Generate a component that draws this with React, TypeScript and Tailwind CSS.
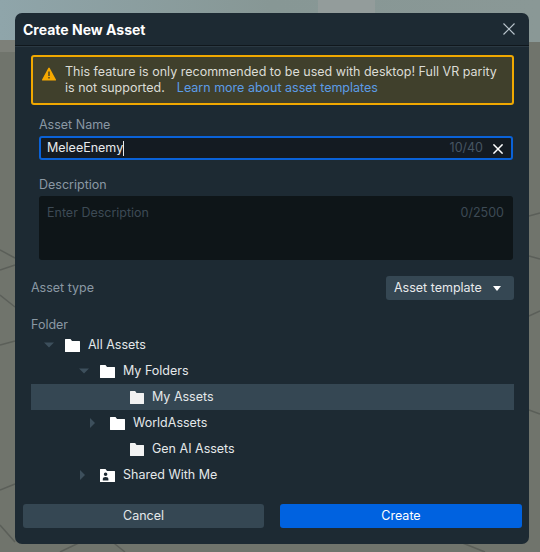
function Close({ size, width, className }: { size: number; width: number; className: string }) {
  return (
    <svg width={size} height={size} viewBox="0 0 12 12" className={className}>
      <path d="M.5.5l11 11M11.500.5l-11 11" stroke="currentColor" strokeWidth={width} fill="none" />
    </svg>
  )
}

function Caret({ open }: { open?: boolean }) {
  return (
    <svg width="10" height="10" viewBox="0 0 10 10" className="text-[#3d4f5c]">
      {open ? <path d="M0 2.500h10L5 7.500z" fill="currentColor" /> : <path d="M1 0v10L6 5z" fill="currentColor" />}
    </svg>
  )
}

function Folder({ shared, dim }: { shared?: boolean; dim?: boolean }) {
  return (
    <svg width={dim ? 14 : 15} height="13" viewBox="0 0 15 13" preserveAspectRatio="none" className={dim ? 'text-[#f2f2f2]' : 'text-white'}>
      <path d="M0 .5Q0 0 .5 0h5l1.500 2h7.500q.5 0 .5.5v10q0 .5-.5.5H.5q-.5 0-.5-.5z" fill="currentColor" />
      {shared && (
        <path d="M3.800 5.200a1.800 1.800 0 1 1 3.600 0a1.800 1.800 0 0 1-3.600 0zM2.800 11.500V10q0-2 2.800-2t2.800 2v1.500z" fill="#1d2a33" />
      )}
    </svg>
  )
}

function Row({ label, indent, caret, shared, active, dim }: { label: string; indent: string; caret?: 'open' | 'closed'; shared?: boolean; active?: boolean; dim?: boolean }) {
  return (
    <div className={`flex h-[26px] items-center text-[12.500px] text-[#e4e8ea] ${active ? 'bg-[#354753]' : ''}`}>
      <div className={`flex items-center ${indent}`}>
        <div className="w-[21px]">{caret && <Caret open={caret === 'open'} />}</div>
        <Folder shared={shared} dim={dim} />
        <span className="ml-2">{label}</span>
      </div>
    </div>
  )
}

export default function App() {
  return (
    <div className="relative h-[552px] w-[540px] overflow-hidden bg-[#70746c] font-['Inter',sans-serif]">
      <svg className="absolute inset-0" width="540" height="552" viewBox="0 0 540 552">
        <defs>
          <linearGradient id="sky" x1="0" y1="0" x2="1" y2="0">
            <stop offset="0" stopColor="#8fa5aa" />
            <stop offset="0.5" stopColor="#879795" />
            <stop offset="1" stopColor="#8a9896" />
          </linearGradient>
        </defs>
        <rect width="540" height="42" fill="url(#sky)" />
        <rect x="318" width="57" height="13" fill="#939c9b" />
        <path d="M0 40h15v12H0z" fill="#7d8079" />
        <path d="M0 250l15 8M0 270l15-5M0 295l15 12M0 345l15-4M0 490l15-6M0 525l15 17M60 552l25-12M110 540l15 12M485 552l-25-10M529 410l11 4M529 216l11-3M529 256l11 3M529 316l11-5" stroke="#5b5f59" strokeWidth="1.500" fill="none" />
      </svg>

      <div className="absolute left-[15px] top-[13px] flex h-[531px] w-[514px] flex-col rounded-[7px] bg-[#1d2a33]">
        <div className="flex h-[32px] items-center justify-between pl-2 pr-[14px]">
          <h1 className="pt-[2px] text-[14px] font-bold leading-none text-white">Create New Asset</h1>
          <Close size={12} width={1.200} className="text-[#b9c4cc]" />
        </div>
        <div className="h-[2px] border-t border-[#10171c] bg-[#2b3943]" />

        <div className="ml-4 mt-2 mr-[15px] flex h-[50px] gap-[9px] rounded-[3px] border-2 border-[#f0a800] bg-[#40402c] pl-[9px] pr-2 pt-[7px] text-[12.500px] leading-[16px] text-[#dcdcd6]">
          <svg width="14" height="14" viewBox="0 0 14 14" className="mt-[3px] shrink-0">
            <path d="M7 .5a.8.8 0 0 1 .7.4l6.200 11.600a.7.7 0 0 1-.6 1H.7a.7.7 0 0 1-.6-1L6.300.9A.8.8 0 0 1 7 .5z" fill="#f5a800" />
            <path d="M6.300 4.500h1.400v4.500H6.300zM6.300 10h1.400v1.400H6.300z" fill="#40402c" />
          </svg>
          <p className="whitespace-nowrap">
            This feature is only recommended to be used with desktop! Full VR parity
            <br />
            is not supported.
            <a className="ml-3 text-[#5c9ce6]">Learn more about asset templates</a>
          </p>
        </div>

        <div className="ml-6 mr-4 mt-[12px]">
          <label className="block h-[19px] text-[12.500px] leading-[16px] text-[#8a98a3]">Asset Name</label>
          <div className="flex h-[24px] items-center rounded-[3px] border-2 border-[#0a62d8] bg-[#141b22] pl-[6px] pr-[8px] pt-px text-[12.500px]">
            <span className="text-[#e8eaec]">MeleeEnemy</span>
            <span className="h-[15px] w-px bg-[#e8eaec]" />
            <span className="ml-auto text-[#465563]">10/40</span>
            <Close size={10} width={1.800} className="ml-[10px] text-white" />
          </div>
          <label className="mt-[16px] block h-[20px] text-[12.500px] leading-[18px] text-[#8a98a3]">Description</label>
          <div className="flex h-[64px] justify-between rounded-[3px] bg-[#0e1518] pl-2 pr-[9px] pt-[9px] text-[12.500px] leading-[16px] text-[#3d4a55]">
            <span>Enter Description</span>
            <span>0/2500</span>
          </div>
        </div>

        <div className="ml-4 mr-[15px] mt-4 flex h-[24px] items-center justify-between text-[12.500px]">
          <span className="text-[#8a98a3]">Asset type</span>
          <div className="flex h-[24px] w-[128px] items-center rounded-[3px] bg-[#354753] pl-2 text-[#e8eaec]">
            Asset template
            <svg width="8" height="5" viewBox="0 0 8 5" className="ml-[11px]"><path d="M0 0h8L4 5z" fill="white" /></svg>
          </div>
        </div>

        <div className="ml-4 mr-[15px] mt-[16px] h-[16px] text-[12.500px] leading-[18px] text-[#8a98a3]">Folder</div>
        <div className="ml-4 mr-[15px]">
          <Row label="All Assets" indent="pl-[13px]" caret="open" />
          <Row label="My Folders" indent="pl-[48px]" caret="open" />
          <Row label="My Assets" indent="pl-[78px]" active dim />
          <Row label="WorldAssets" indent="pl-[58px]" caret="closed" />
          <Row label="Gen AI Assets" indent="pl-[78px]" dim />
          <Row label="Shared With Me" indent="pl-[48px]" caret="closed" shared />
        </div>

        <div className="ml-2 mt-[16px] flex gap-4 text-[12.500px]">
          <button className="h-[24px] w-[241px] rounded-[3px] bg-[#354753] pt-px text-[#e4e8ea]">Cancel</button>
          <button className="h-[24px] w-[242px] rounded-[3px] bg-[#0062e0] pt-px text-white">Create</button>
        </div>
      </div>
    </div>
  )
}
